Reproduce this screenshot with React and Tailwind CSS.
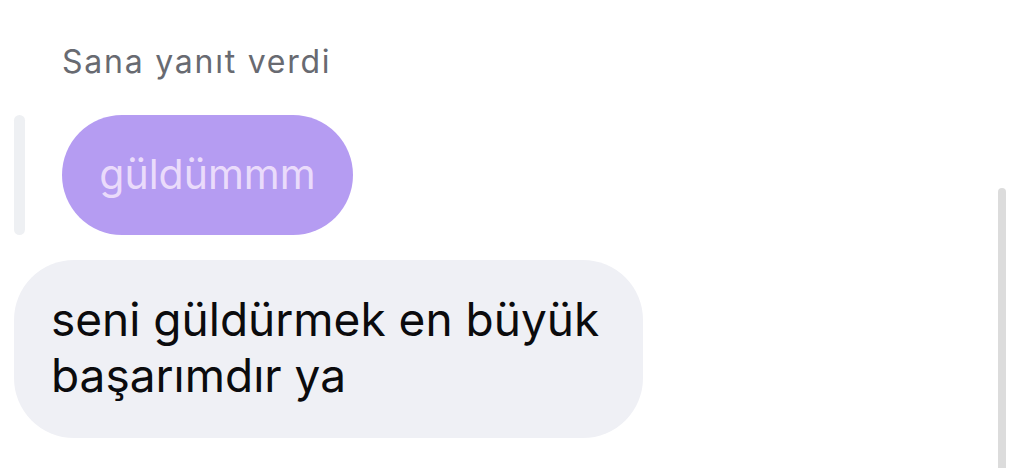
import React from 'react';

const App = () => (
    <div className="relative w-[1016px] h-[468px] bg-white overflow-hidden" style={{ fontFamily: 'Inter, "Noto Sans", sans-serif' }}>
        <div className="flex flex-col pt-[40px]">
            {/* Reply header */}
            <p className="pl-[62px] text-[32px] leading-[44px] tracking-[0.055em] text-[#686a71]">Sana yanıt verdi</p>

            {/* Quoted message */}
            <div className="flex items-stretch gap-[37px] mt-[31px] pl-[14px]">
                <div className="w-[11px] rounded-full bg-[#eef0f3]"></div>
                <div className="h-[120px] w-[291px] rounded-full bg-[#b59cf2] flex items-center justify-center">
                    <span className="text-[41px] text-[#eadbfb]">güldümmm</span>
                </div>
            </div>

            {/* Reply bubble */}
            <div className="mt-[25px] ml-[14px] w-[629px] h-[178px] rounded-[60px] bg-[#eff0f5] pl-[37px] pt-[31px]">
                <p className="text-[46px] leading-[56px] text-[#0b0b0d]">seni güldürmek en büyük başarımdır ya</p>
            </div>
        </div>

        {/* Scrollbar */}
        <div className="absolute left-[998px] top-[188px] w-[8px] h-[300px] rounded-full bg-[#dcdcdc]"></div>
    </div>
);

export default App;
